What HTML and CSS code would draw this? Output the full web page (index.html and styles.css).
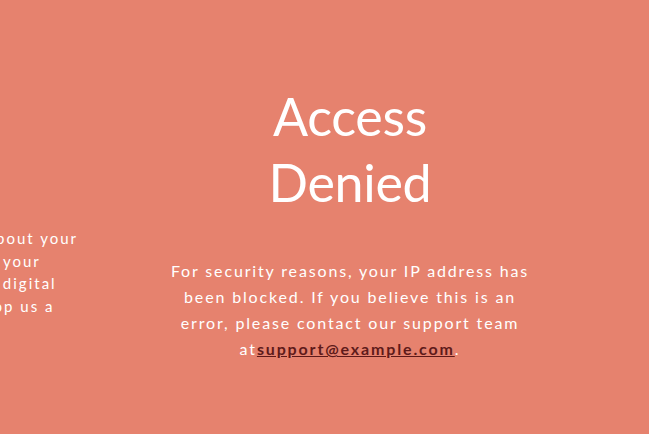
FILE: index.html
```html
<!DOCTYPE html>
<html lang="en">
<head>
<meta charset="utf-8">
<title>Access Denied</title>
<link rel="stylesheet" href="styles.css">
</head>
<body>
<div class="page">
  <aside class="side">
    <p class="side-text">Tell us about your<br>idea and your<br>vision, a digital<br>plan. Drop us a<br>line.</p>
  </aside>
  <main class="main">
    <h1 class="title">Access<br>Denied</h1>
    <p class="message">For security reasons, your IP address has been blocked. If you believe this is an error, please contact our support team at<a class="link" href="#">support@example.com</a>.</p>
  </main>
</div>
</body>
</html>
```
FILE: styles.css
```css
html, body {
  margin: 0;
  padding: 0;
}
body {
  background: #e6826e;
  color: #ffffff;
  font-family: "Lato", "Noto Sans", sans-serif;
  overflow: hidden;
  height: 434px;
}
.page {
  display: flex;
  align-items: flex-start;
  height: 100%;
}
.side {
  flex: 0 0 160px;
  margin-left: -74px;
  padding-top: 227px;
}
.side-text {
  margin: 0;
  font-size: 15px;
  line-height: 22.7px;
  letter-spacing: 2px;
  white-space: nowrap;
}
.main {
  flex: 1;
  display: flex;
  flex-direction: column;
  align-items: center;
  padding-top: 83px;
  margin-right: 35px;
}
.title {
  margin: 0;
  font-size: 52px;
  font-weight: 400;
  line-height: 66px;
  text-align: center;
  letter-spacing: -0.3px;
}
.message {
  margin: 43px 0 0;
  width: 362px;
  text-align: center;
  font-size: 16px;
  line-height: 26px;
  letter-spacing: 1.85px;
}
.link {
  color: #5e1a1a;
  font-weight: 700;
  text-decoration: underline;
}
```
